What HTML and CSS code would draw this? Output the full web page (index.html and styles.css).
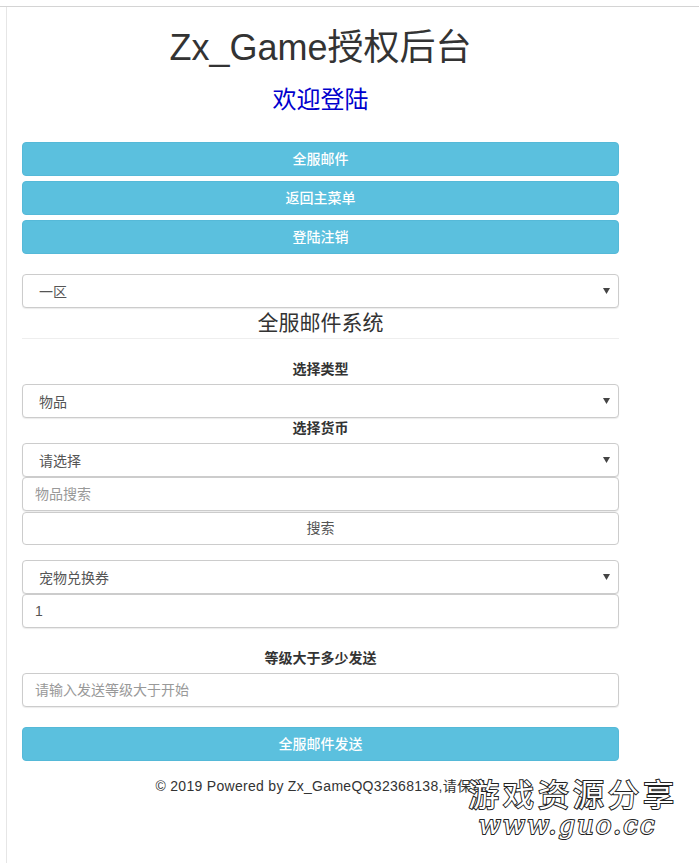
FILE: index.html

```html
<!DOCTYPE html>
<html lang="zh-CN">
<head>
  <meta charset="UTF-8">
  <title>Zx_Game授权后台</title>
  <link rel="stylesheet" href="styles.css">
</head>
<body>
  <div class="page">
    <div class="container">
      <h1 class="title">Zx_Game授权后台</h1>
      <h3 class="welcome">欢迎登陆</h3>

      <div class="menu">
        <button class="btn btn-info">全服邮件</button>
        <button class="btn btn-info">返回主菜单</button>
        <button class="btn btn-info">登陆注销</button>
      </div>

      <select class="form-control server">
        <option>一区</option>
      </select>

      <h4 class="section-title">全服邮件系统</h4>

      <label class="field-label first">选择类型</label>
      <select class="form-control">
        <option>物品</option>
      </select>
      <label class="field-label tight">选择货币</label>
      <select class="form-control">
        <option>请选择</option>
      </select>
      <input class="form-control" type="text" placeholder="物品搜索">
      <button class="btn btn-default">搜索</button>

      <select class="form-control item">
        <option>宠物兑换券</option>
      </select>
      <input class="form-control" type="text" value="1">

      <label class="field-label level">等级大于多少发送</label>
      <input class="form-control" type="text" placeholder="请输入发送等级大于开始">

      <button class="btn btn-info send">全服邮件发送</button>

      <p class="footer">© 2019 Powered by Zx_GameQQ32368138,请保留</p>
    </div>
  </div>

  <div class="watermark">
    <div class="wm-cn">游戏资源分享</div>
    <div class="wm-url">www.guo.cc</div>
  </div>
</body>
</html>
```

FILE: styles.css

```css
* {
  box-sizing: border-box;
}

html, body {
  height: 100%;
}

body {
  margin: 0;
  padding-top: 6px;
  background: #fff;
  color: #333;
  font-family: "Liberation Sans", "Noto Sans CJK SC", sans-serif;
  font-size: 14px;
  line-height: 20px;
  overflow: hidden;
}

.page {
  height: 857px;
  border-top: 1px solid #d4d4d4;
  padding-left: 6px;
}

.container {
  width: 613px;
  height: 100%;
  border-left: 1px solid #e6e6e6;
  padding: 0 0 0 15px;
  display: flex;
  flex-direction: column;
  align-items: stretch;
}

.title {
  margin: 19px 0 0;
  font-size: 36px;
  font-weight: 400;
  line-height: 44px;
  text-align: center;
}

.welcome {
  margin: 15px 0 0;
  font-size: 24px;
  font-weight: 400;
  line-height: 30px;
  color: #0000cd;
  text-align: center;
}

.menu {
  margin-top: 27px;
  display: flex;
  flex-direction: column;
  gap: 5px;
}

.btn {
  display: block;
  width: 100%;
  height: 34px;
  padding: 0 12px;
  border: 1px solid transparent;
  border-radius: 4px;
  font-family: inherit;
  font-size: 14px;
  line-height: 20px;
  text-align: center;
}

.btn-info {
  background: #5bc0de;
  border-color: #55b9d8;
  color: #fff;
  font-weight: 500;
}

.btn-default {
  height: 33px;
  margin-top: 1px;
  padding-bottom: 2px;
  background: #fff;
  border-color: #ccc;
  color: #555;
}

.form-control {
  display: block;
  width: 100%;
  height: 34px;
  padding: 6px 12px;
  background: #fff;
  border: 1px solid #ccc;
  border-radius: 4px;
  box-shadow: 0 1px 1px rgba(0,0,0,0.08);
  color: #555;
  font-family: inherit;
  font-size: 14px;
  line-height: 20px;
}

.form-control::placeholder {
  color: #999;
}

select.form-control {
  appearance: none;
  padding: 7px 12px 5px 16px;
  background-image: url("data:image/svg+xml,%3Csvg xmlns='http://www.w3.org/2000/svg' width='7' height='6'%3E%3Cpath d='M0 0h7L3.5 6z' fill='%23444'/%3E%3C/svg%3E");
  background-repeat: no-repeat;
  background-position: right 8px center;
}

.server {
  margin-top: 20px;
}

.section-title {
  margin: 0;
  height: 31px;
  border-bottom: 1px solid #eee;
  font-size: 21px;
  font-weight: 400;
  line-height: 29px;
  text-align: center;
}

.field-label {
  display: block;
  font-size: 14px;
  font-weight: 700;
  line-height: 20px;
  text-align: center;
}

.field-label.first {
  margin-top: 20px;
  margin-bottom: 5px;
}

.field-label.tight {
  margin-bottom: 5px;
}

.item {
  margin-top: 15px;
}

.field-label.level {
  margin-top: 20px;
  margin-bottom: 5px;
}

.send {
  margin-top: 20px;
}

.footer {
  margin: 15px 0 0;
  letter-spacing: 0.3px;
  text-align: center;
}

.watermark {
  position: absolute;
  left: 468px;
  top: 776px;
  width: 206px;
  text-align: center;
  color: #fff;
  -webkit-text-stroke: 2px #222;
  paint-order: stroke fill;
}

.wm-cn {
  font-size: 31px;
  font-weight: 400;
  line-height: 39px;
  letter-spacing: 4px;
  white-space: nowrap;
}

.wm-url {
  margin-left: -7px;
  font-family: "DejaVu Serif", serif;
  font-size: 26px;
  font-style: italic;
  font-weight: 400;
  line-height: 20px;
  letter-spacing: 2px;
  white-space: nowrap;
}
```
